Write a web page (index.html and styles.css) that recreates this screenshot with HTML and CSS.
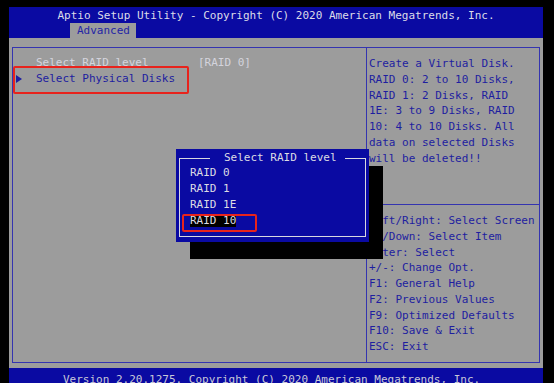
FILE: index.html
```html
<!DOCTYPE html>
<html lang="en">
<head>
    <meta charset="UTF-8">
    <title>Aptio Setup Utility</title>
    <link rel="stylesheet" href="styles.css">
</head>
<body>
    <div class="screen">
        <div class="header">
            <div class="title">Aptio Setup Utility - Copyright (C) 2020 American Megatrends, Inc.</div>
            <div class="tabs"><span class="tab">Advanced</span></div>
        </div>

        <div class="main">
            <div class="panel">
                <div class="options">
                    <div class="option selected">
                        <span class="pointer"></span>
                        <span class="label">Select RAID level</span>
                        <span class="value">[RAID 0]</span>
                    </div>
                    <div class="option">
                        <span class="pointer">
                            <svg width="6" height="8" viewBox="0 0 6 8"><path d="M0 0 L6 4 L0 8 Z" fill="#1e1ea0"/></svg>
                        </span>
                        <span class="label">Select Physical Disks</span>
                    </div>
                </div>
                <div class="side">
                    <div class="desc">
                        <div>Create a Virtual Disk.</div>
                        <div>RAID 0: 2 to 10 Disks,</div>
                        <div>RAID 1: 2 Disks, RAID</div>
                        <div>1E: 3 to 9 Disks, RAID</div>
                        <div>10: 4 to 10 Disks. All</div>
                        <div>data on selected Disks</div>
                        <div>will be deleted!!</div>
                    </div>
                    <div class="help">
                        <div>Left/Right: Select Screen</div>
                        <div>Up/Down: Select Item</div>
                        <div>Enter: Select</div>
                        <div>+/-: Change Opt.</div>
                        <div>F1: General Help</div>
                        <div>F2: Previous Values</div>
                        <div>F9: Optimized Defaults</div>
                        <div>F10: Save &amp; Exit</div>
                        <div>ESC: Exit</div>
                    </div>
                </div>
            </div>
        </div>

        <div class="footer">Version 2.20.1275. Copyright (C) 2020 American Megatrends, Inc.</div>

        <div class="popup">
            <div class="frame">
                <span class="popup-title">Select RAID level</span>
                <div class="choice">RAID 0</div>
                <div class="choice">RAID 1</div>
                <div class="choice">RAID 1E</div>
                <div class="choice"><span class="current">RAID 10</span></div>
            </div>
        </div>

        <div class="mark mark-disks"></div>
        <div class="mark mark-raid"></div>
    </div>
</body>
</html>
```

FILE: styles.css
```css
body {
    margin: 0;
    background-color: #000;
    font-family: 'DejaVu Sans Mono', monospace;
    font-size: 11px;
    line-height: 15.75px;
    height: 383px;
    overflow: hidden;
}

.screen {
    position: relative;
    margin: 7px 11px 0 9px;
}

.header {
    background-color: #0a0aa2;
    color: #dcdce8;
    height: 31px;
}

.title {
    height: 16px;
    line-height: 17px;
    text-align: center;
}

.tabs {
    padding-left: 61px;
}

.tab {
    display: inline-block;
    height: 15px;
    line-height: 15px;
    padding: 0 6px 0 7px;
    background-color: #9c9c9c;
    color: #2424a6;
}

.main {
    background-color: #9c9c9c;
    height: 330px;
    padding: 9px 3px 5px;
    box-sizing: border-box;
}

.panel {
    display: grid;
    grid-template-columns: 353px 1fr;
    height: 316px;
    border: 1px solid #3434b0;
    box-sizing: border-box;
    color: #1e1ea0;
}

.options {
    padding-top: 7px;
}

.option {
    display: flex;
    align-items: center;
    height: 16px;
}

.option.selected {
    color: #d4d4dc;
}

.pointer {
    width: 23px;
    padding-left: 3px;
    box-sizing: border-box;
    display: flex;
    align-items: center;
}

.label {
    width: 162px;
}

.side {
    border-left: 1px solid #3434b0;
    display: flex;
    flex-direction: column;
}

.desc {
    height: 157px;
    padding: 8px 0 0 2px;
    box-sizing: border-box;
    border-bottom: 1px solid #3434b0;
}

.help {
    padding: 8px 0 0 2px;
}

.footer {
    background-color: #0a0aa2;
    color: #c8c8d8;
    height: 20px;
    padding: 4px 0 0 54px;
    box-sizing: border-box;
}

.popup {
    position: absolute;
    left: 167px;
    top: 142px;
    width: 193px;
    height: 93px;
    padding: 9px 3px 5px;
    box-sizing: border-box;
    background-color: #0a0aa2;
    box-shadow: 14px 17px 0 #000;
    color: #dcdce4;
}

.frame {
    position: relative;
    height: 100%;
    border: 1px solid #d8d8e0;
    box-sizing: border-box;
    padding: 6px 0 0 10px;
}

.popup-title {
    position: absolute;
    left: 30px;
    top: -9px;
    padding: 0 8px 0 14px;
    background-color: #0a0aa2;
}

.choice {
    height: 16px;
}

.current {
    background-color: #000;
}

.mark {
    position: absolute;
    border: 2px solid #e8231c;
    border-radius: 2px;
    box-sizing: border-box;
}

.mark-disks {
    left: 4px;
    top: 59px;
    width: 176px;
    height: 28px;
}

.mark-raid {
    left: 173px;
    top: 207px;
    width: 75px;
    height: 18px;
}
```
